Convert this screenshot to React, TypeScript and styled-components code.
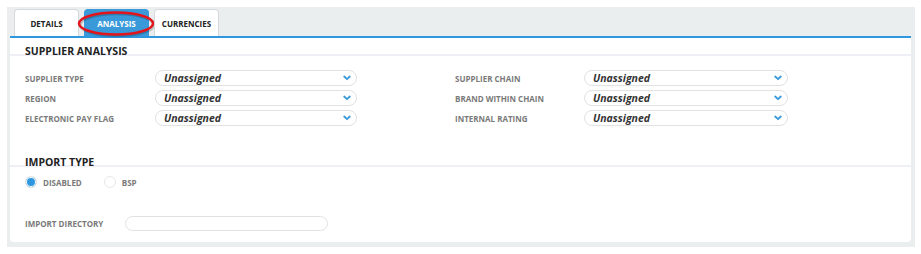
import React, { FunctionComponent } from "react"
import styled, { createGlobalStyle } from "styled-components"

const GlobalStyle = createGlobalStyle`
    body {
        margin: 0;
        background: #ffffff;
        font-family: "Open Sans", "Liberation Sans", sans-serif;
    }
`

const Page = styled.div`
    padding: 7px 6px 7px 7px;
`

const Frame = styled.div`
    background-color: #ebeeef;
    padding: 2px 4px 5px 3px;
`

const TabBar = styled.div`
    display: flex;
    gap: 5px;
    padding-left: 4px;
    height: 27px;
`

const Tab = styled.div<{ $active?: boolean }>`
    position: relative;
    width: 65px;
    box-sizing: border-box;
    display: flex;
    align-items: center;
    justify-content: center;
    font-size: 8px;
    font-weight: 700;
    color: ${p => (p.$active ? "#ffffff" : "#222")};
    background-color: ${p => (p.$active ? "#3a9ad9" : "#ffffff")};
    border: 1px solid ${p => (p.$active ? "#3a9ad9" : "#d6d9db")};
    border-bottom: none;
    border-radius: 4px 4px 0 0;
`

const Circle = styled.svg`
    position: absolute;
    left: -7px;
    top: 1px;
    overflow: visible;
    pointer-events: none;
`

const Panel = styled.div`
    background-color: #ffffff;
    border-top: 2px solid #2e97e0;
    border-radius: 0 0 4px 4px;
    height: 206px;
    box-sizing: border-box;
`

const SectionTitle = styled.div`
    font-size: 10.5px;
    font-weight: 700;
    color: #222;
    padding: 6px 15px 0;
    height: 18px;
    line-height: 14px;
    border-bottom: 2px solid #efeff7;
    box-sizing: border-box;
`

const FieldGrid = styled.div`
    display: grid;
    grid-template-columns: 130px 202px 98px 129px 204px;
    row-gap: 4px;
    padding: 14px 15px 23px;
    align-items: center;
`

const Label = styled.div`
    font-size: 8px;
    font-weight: 700;
    color: #7a7a7a;
`

const SelectBox = styled.div`
    height: 16px;
    box-sizing: border-box;
    border: 1px solid #e2e2e2;
    border-radius: 8px;
    display: flex;
    align-items: center;
    justify-content: space-between;
    padding: 0 5px 0 8px;
    font-size: 10.5px;
    font-style: italic;
    font-weight: 700;
    color: #333;
`

const RadioRow = styled.div`
    display: flex;
    align-items: center;
    padding: 9px 15px 0;
    gap: 6px;
    height: 12px;
`

const Radio = styled.span<{ $checked?: boolean }>`
    width: 12px;
    height: 12px;
    box-sizing: border-box;
    border-radius: 50%;
    border: 1px solid #e8e8e8;
    background-color: ${p => (p.$checked ? "#2e97e0" : "#ffffff")};
    box-shadow: inset 0 0 0 1px #ffffff;
`

const RadioLabel = styled(Label)`
    margin-right: 16px;
`

const DirRow = styled.div`
    display: flex;
    align-items: center;
    padding: 28px 15px 0;
`

const DirLabel = styled(Label)`
    width: 100px;
`

const TextInput = styled.div`
    width: 203px;
    height: 15px;
    box-sizing: border-box;
    border: 1px solid #e2e2e2;
    border-radius: 8px;
`

const Chevron: FunctionComponent = () => (
    <svg width="8" height="6" viewBox="0 0 8 6">
        <path d="M1.2 1.5 L4 4.2 L6.8 1.5" fill="none" stroke="#3a9ad9" strokeWidth="1.8" strokeLinecap="round" strokeLinejoin="round" />
    </svg>
)

const Select: FunctionComponent<{ value: string }> = ({ value }) => (
    <SelectBox>
        <span>{value}</span>
        <Chevron />
    </SelectBox>
)

const rows = [
    ["SUPPLIER TYPE", "SUPPLIER CHAIN"],
    ["REGION", "BRAND WITHIN CHAIN"],
    ["ELECTRONIC PAY FLAG", "INTERNAL RATING"],
]

const App: FunctionComponent = () => {
    return (
        <Page>
            <GlobalStyle />
            <Frame>
                <TabBar>
                    <Tab>DETAILS</Tab>
                    <Tab $active>
                        ANALYSIS
                        <Circle width="76" height="26" viewBox="0 0 76 26">
                            <ellipse cx="39" cy="13.8" rx="37" ry="11" fill="none" stroke="rgba(0,0,0,0.2)" strokeWidth="3" />
                            <ellipse cx="38" cy="12.5" rx="37" ry="11" fill="none" stroke="#e3141b" strokeWidth="2.5" />
                        </Circle>
                    </Tab>
                    <Tab>CURRENCIES</Tab>
                </TabBar>
                <Panel>
                    <SectionTitle>SUPPLIER ANALYSIS</SectionTitle>
                    <FieldGrid>
                        {rows.map(([left, right]) => (
                            <React.Fragment key={left}>
                                <Label>{left}</Label>
                                <Select value="Unassigned" />
                                <div />
                                <Label>{right}</Label>
                                <Select value="Unassigned" />
                            </React.Fragment>
                        ))}
                    </FieldGrid>
                    <SectionTitle>IMPORT TYPE</SectionTitle>
                    <RadioRow>
                        <Radio $checked />
                        <RadioLabel>DISABLED</RadioLabel>
                        <Radio />
                        <RadioLabel>BSP</RadioLabel>
                    </RadioRow>
                    <DirRow>
                        <DirLabel>IMPORT DIRECTORY</DirLabel>
                        <TextInput />
                    </DirRow>
                </Panel>
            </Frame>
        </Page>
    )
}

export default App
